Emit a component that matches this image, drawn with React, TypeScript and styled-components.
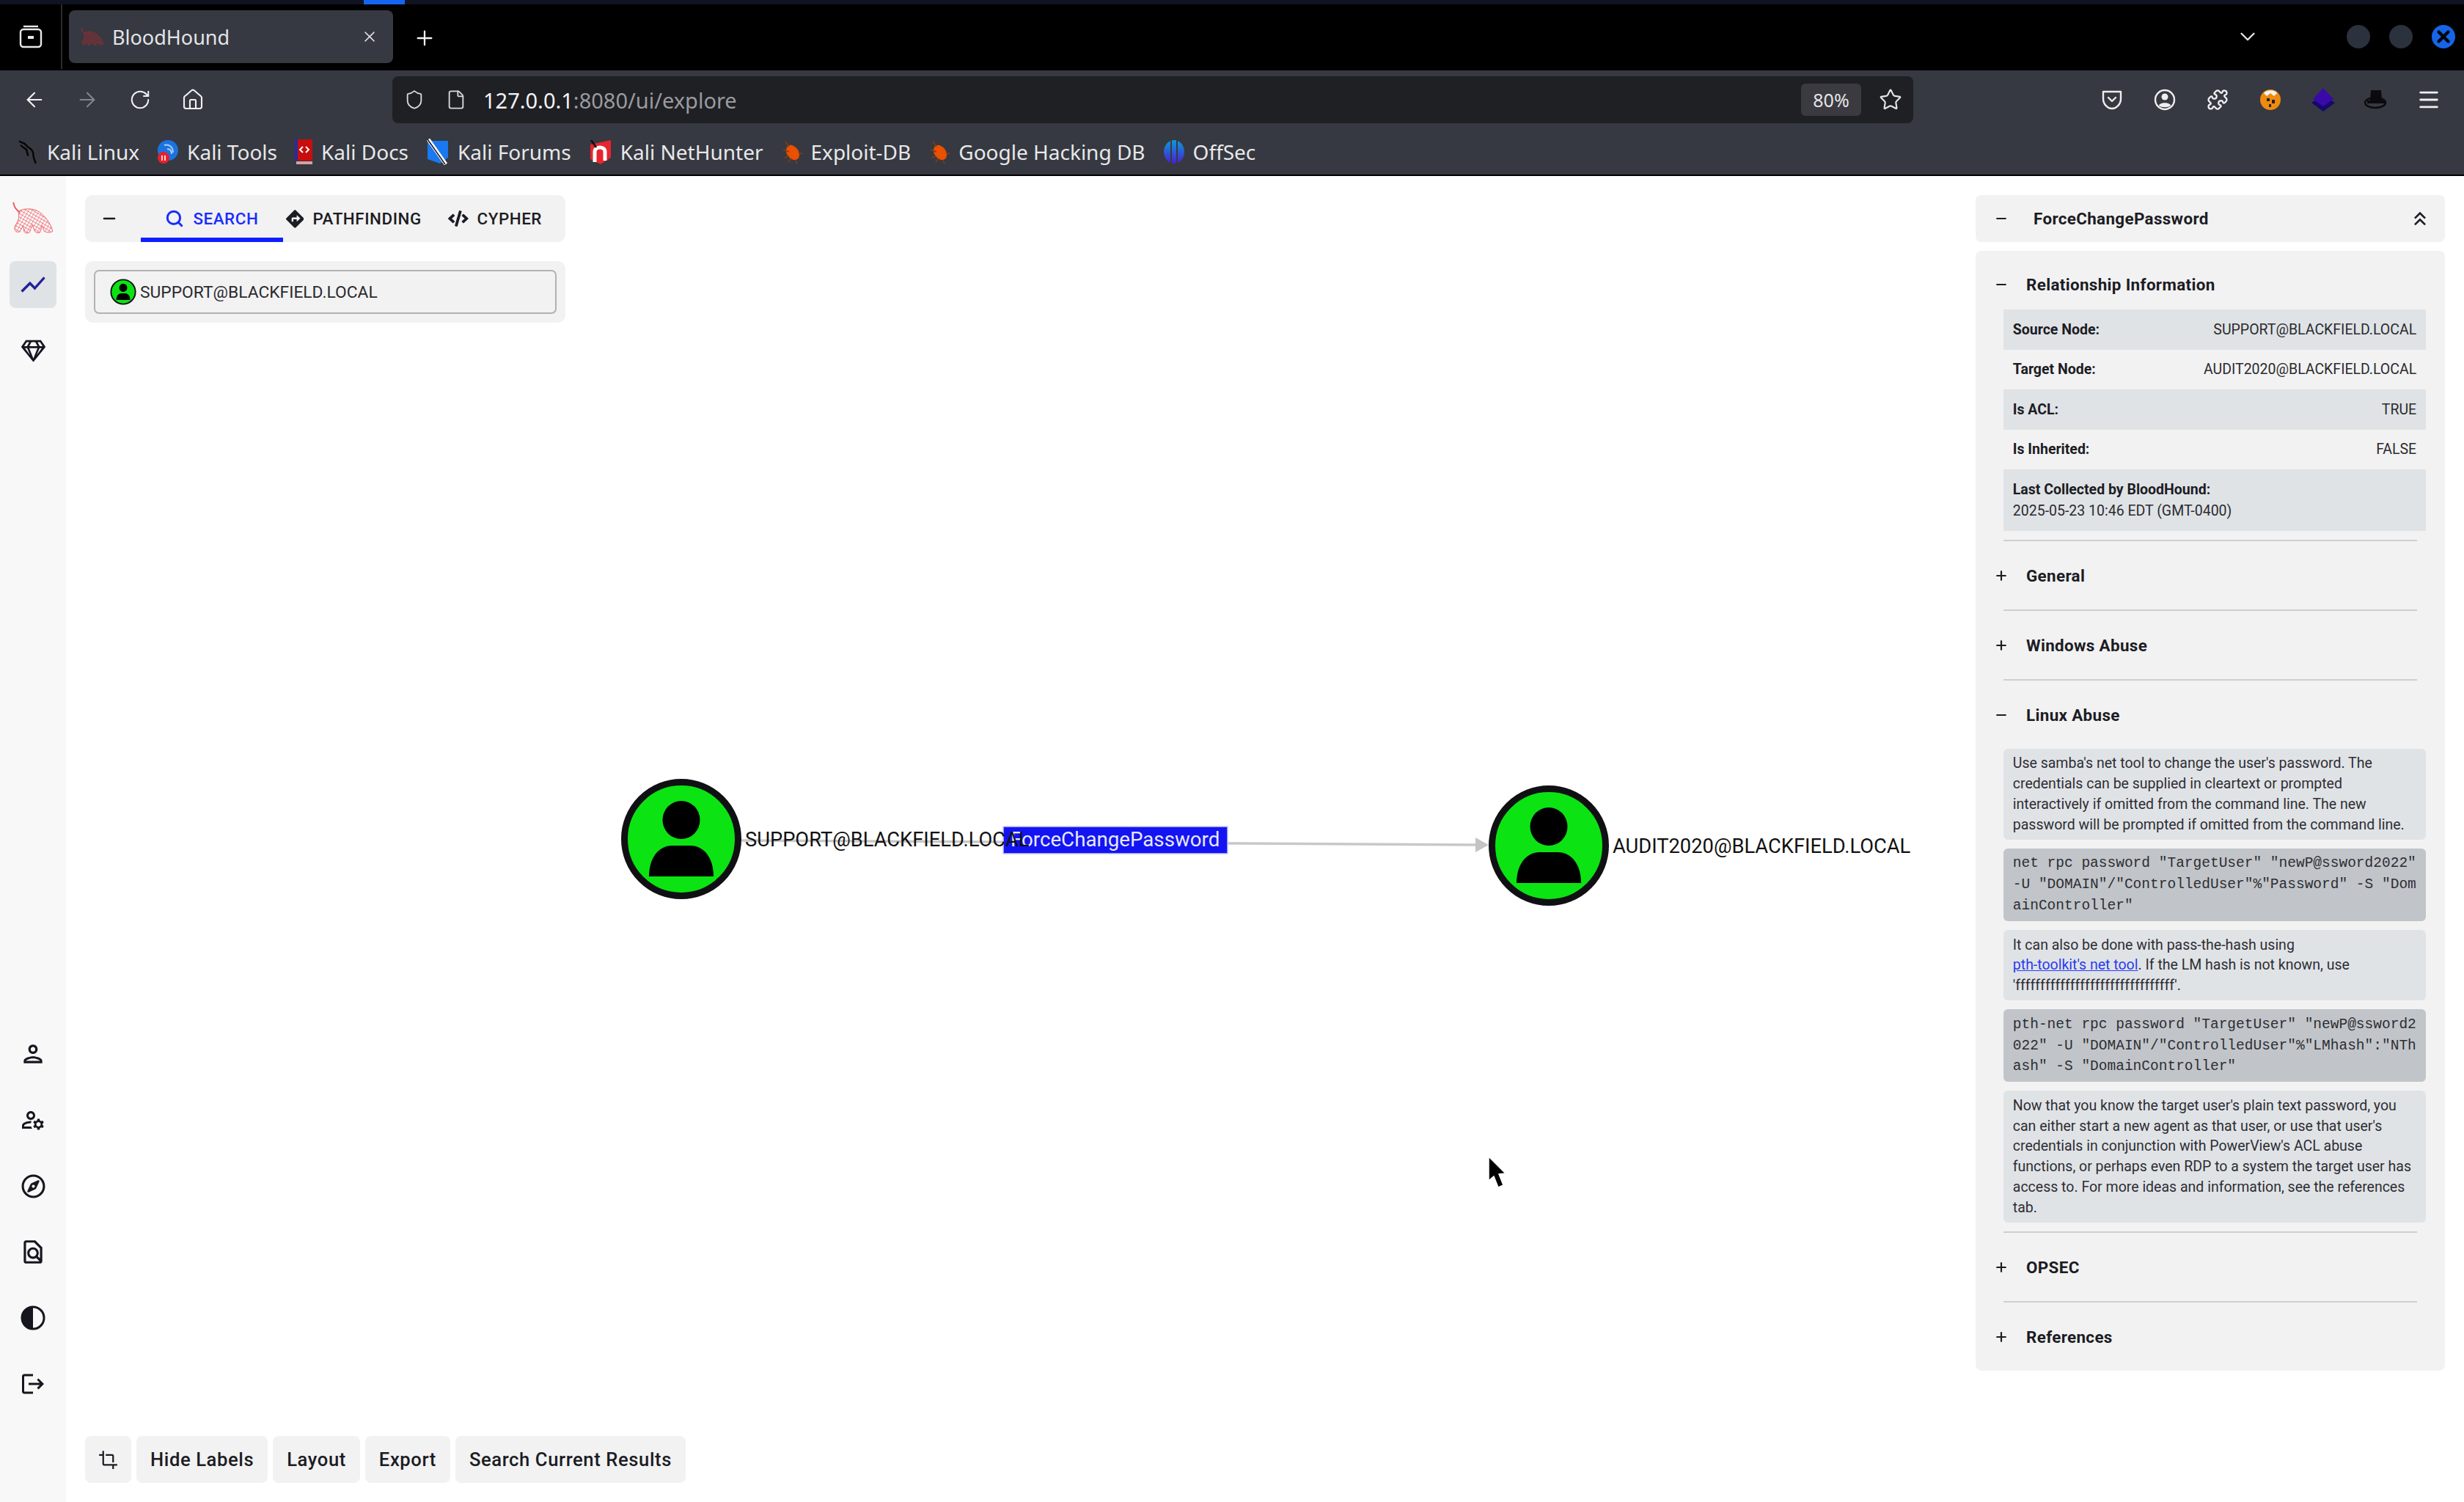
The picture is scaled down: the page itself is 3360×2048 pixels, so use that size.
import React from "react";
import styled, { createGlobalStyle } from "styled-components";
import { ArrowLeft, ArrowRight, RotateCw, Home, Shield, File, Star, Plus, X, ChevronDown, Puzzle, Menu, Minus, Search as SearchGlyph } from "lucide-react";
import { MdShowChart, MdOutlinePerson, MdOutlineManageAccounts, MdOutlineFindInPage, MdLogout, MdCrop, MdKeyboardDoubleArrowUp } from "react-icons/md";
import { FaRegCompass, FaRegGem, FaDirections, FaCode } from "react-icons/fa";

const Global = createGlobalStyle`
  html, body { margin: 0; padding: 0; background: #fff; }
  * { box-sizing: border-box; }
  body { font-family: Roboto, "Liberation Sans", sans-serif; width: 3360px; height: 2048px; overflow: hidden; }
`;

const Page = styled.div`
  width: 3360px; height: 2048px; display: flex; flex-direction: column;
`;
const Strip = styled.div`
  height: 6px; background: #0f1322; display: flex;
`;
const StripMark = styled.div`
  width: 56px; height: 6px; margin-left: 496px; background: #1565f0;
`;

/* ---- browser chrome ---- */
const TabBar = styled.div`
  height: 90px; background: #000; display: flex; align-items: flex-start; color: #e8e8ea; padding-right: 12px;
  font-family: "Noto Sans", sans-serif;
`;
const ViewButton = styled.div`
  width: 85px; height: 88px; border-right: 2px solid #2c2c30; display: flex; align-items: center; justify-content: center;
`;
const Tab = styled.div`
  width: 442px; height: 72px; margin: 8px 0 0 9px; background: #363941; border-radius: 8px; display: flex; align-items: center; padding: 0 20px 0 16px;
  font-size: 27px; gap: 11px;
`;
const TabTitle = styled.span`
  flex: 1; color: #e4e4e8;
`;
const NewTab = styled.div`
  width: 32px; height: 32px; margin: 30px 0 0 27px; display: flex; align-items: center; justify-content: center;
`;
const ChevronSlot = styled.div`
  margin: 26px 0 0 auto; display: flex; align-items: center; justify-content: center; width: 36px; height: 36px;
`;
const WindowDot = styled.div<{ $active?: boolean; $first?: boolean }>`
  width: 32px; height: 32px; border-radius: 50%; margin: 28px 0 0 ${(p) => (p.$first ? "117px" : "26px")};
  background: ${(p) => (p.$active ? "#1565e8" : "#2b313d")}; display: flex; align-items: center; justify-content: center; color: #02050a;
`;
const NavBar = styled.div`
  height: 80px; background: #363941; display: flex; align-items: center; padding-left: 11px; color: #f0f0f2;
  font-family: "Noto Sans", sans-serif;
`;
const NavButton = styled.div<{ $dim?: boolean }>`
  width: 72px; height: 60px; display: flex; align-items: center; justify-content: center; color: ${(p) => (p.$dim ? "#83858b" : "#f0f0f2")};
`;
const UrlBar = styled.div`
  width: 2074px; height: 64px; margin: 0 235px 0 236px; background: #1f2024; border-radius: 8px; display: flex; align-items: center; padding: 0 16px 0 16px; font-size: 29px;
`;
const UrlIconSlot = styled.div`
  width: 28px; display: flex; justify-content: center; margin-right: 29px; color: #d9d9dd;
`;
const UrlText = styled.div`
  flex: 1; margin-left: -6px; color: #f4f4f6;
`;
const UrlDim = styled.span`
  color: #9a9ba0;
`;
const ZoomPill = styled.div`
  width: 82px; height: 44px; background: #3a3a40; border-radius: 6px; display: flex; align-items: center; justify-content: center; font-size: 25px; color: #e4e4e6;
`;
const StarSlot = styled.div`
  width: 71px; padding-left: 8px; display: flex; justify-content: center; color: #e4e4e6; margin-right: -16px;
`;
const Bookmarks = styled.div`
  height: 64px; background: #363941; border-bottom: 2px solid #000; display: flex; align-items: center; padding-left: 25px; gap: 24px;
  font-family: "Noto Sans", sans-serif; font-size: 28px; color: #e8e8ea;
`;
const Bookmark = styled.div`
  display: flex; align-items: center; gap: 11px; white-space: nowrap;
`;

/* ---- app ---- */
const Main = styled.div`
  flex: 1; display: flex; min-height: 0; color: #1a1a22; font-family: Roboto, sans-serif;
`;
const Sidebar = styled.nav`
  width: 90px; background: #f8f8f8; display: flex; flex-direction: column; align-items: center; padding: 35px 0 129px;
`;
const LogoSlot = styled.div`
  height: 44px; margin-bottom: 37px; display: flex;
`;
const NavGroup = styled.div<{ $bottom?: boolean }>`
  display: flex; flex-direction: column; gap: 26px; ${(p) => p.$bottom && "margin-top: auto;"}
`;
const SideItem = styled.div<{ $active?: boolean }>`
  width: 64px; height: 64px; border-radius: 8px; display: flex; align-items: center; justify-content: center;
  background: ${(p) => (p.$active ? "#e0e3e6" : "transparent")}; color: ${(p) => (p.$active ? "#22239a" : "#16161f")};
`;
const Canvas = styled.div`
  flex: 1; position: relative; display: flex; justify-content: space-between; padding: 26px;
`;
const GraphLayer = styled.svg`
  position: absolute; left: 0; top: 0; width: 3270px; height: 1808px;
`;
const NodeLabel = styled.text`
  font-family: Roboto, sans-serif; font-size: 27.3px; fill: #111;
`;
const EdgeLabel = styled.text`
  font-family: Roboto, sans-serif; font-size: 27.7px; fill: #e6e8ff;
`;
const LeftColumn = styled.div`
  position: relative; width: 860px; display: flex; flex-direction: column;
`;
const Toolbar = styled.div`
  width: 655px; height: 64px; background: #f2f2f2; border-radius: 10px; display: flex; align-items: stretch;
`;
const Collapse = styled.div`
  width: 76px; display: flex; align-items: center; justify-content: center; padding-right: 9px;
`;
const TabItem = styled.div<{ $active?: boolean }>`
  display: flex; align-items: center; justify-content: center; gap: 12px; padding: 6px 4px 0; font-size: 22.4px; font-weight: 500; letter-spacing: 0.55px;
  margin-right: ${(p) => (p.$active ? "0" : "28px")};
  min-width: ${(p) => (p.$active ? "194px" : "0")};
  color: ${(p) => (p.$active ? "#1a2dff" : "#1c1c24")};
  border-bottom: 6px solid ${(p) => (p.$active ? "#0f1eff" : "transparent")};
`;
const SearchCard = styled.div`
  width: 655px; height: 84px; margin-top: 26px; background: #f2f2f2; border-radius: 10px; padding: 12px;
`;
const SearchField = styled.div`
  height: 60px; border: 2px solid #b2b2b2; border-radius: 7px; display: flex; align-items: center; gap: 5px; padding-left: 20px; font-size: 22.8px; color: #2a2a30;
`;
const ActionRow = styled.div`
  margin-top: auto; display: flex; gap: 7px;
`;
const ActionButton = styled.div`
  flex: none; height: 64px; padding: 0 19px; background: #f2f2f2; border-radius: 8px; display: flex; align-items: center; font-size: 25.6px; font-weight: 500; letter-spacing: 0.6px; color: #1c1c24; white-space: nowrap;
`;
const CropButton = styled(ActionButton)`
  width: 63px; padding: 0; justify-content: center;
`;
const RightColumn = styled.div`
  position: relative; width: 640px; display: flex; flex-direction: column; gap: 12px;
`;
const PanelHead = styled.div`
  height: 64px; background: #f2f2f2; border-radius: 8px; display: flex; align-items: center; padding: 0 18px 0 25px; gap: 34px; font-size: 22.4px; font-weight: 700; letter-spacing: 0.35px; color: #1c1c24;
`;
const PanelTitle = styled.div`
  flex: 1;
`;
const PanelBody = styled.div`
  background: #f2f2f2; border-radius: 8px; padding: 11px 0 12px;
`;
const SectionHead = styled.div`
  height: 69px; display: flex; align-items: center; gap: 24px; padding-left: 25px; font-size: 22.4px; font-weight: 700; letter-spacing: 0.35px; color: #1c1c24;
`;
const Rule = styled.hr`
  margin: 12px 38px; height: 2px; border: 0; background: #cfcfcf;
`;
const Rows = styled.div`
  margin: 0 26px 0 38px;
`;
const Row = styled.div<{ $shaded?: boolean }>`
  height: 54.5px; padding: 0 12.8px; display: flex; align-items: center; justify-content: space-between; font-size: 19.5px; color: #2b2b30;
  background: ${(p) => (p.$shaded ? "#e0e3e6" : "transparent")};
`;
const RowLabel = styled.span`
  font-weight: 700; color: #1c1c24;
`;
const StackRow = styled.div`
  height: 84px; padding: 0 12.8px; display: flex; flex-direction: column; justify-content: center; gap: 6px; font-size: 19.5px; background: #e0e3e6; color: #2b2b30;
`;
const Note = styled.p`
  margin: 12px 0 0; padding: 6.4px 12.8px; background: #e0e3e6; border-radius: 6px; font-size: 19.5px; line-height: 27.8px; color: #2e2e34;
`;
const Code = styled.pre`
  margin: 12px 0 0; padding: 6.4px 12.8px; background: #c1c5c9; border-radius: 6px; font-family: "Liberation Mono", monospace; font-size: 19.5px; line-height: 28.8px; color: #2e2e34;
  white-space: pre-wrap; word-break: break-all;
`;
const DocLink = styled.a`
  color: #2a3cf0; text-decoration: underline; display: inline-block; white-space: nowrap;
`;

/* ---- drawings ---- */
const Hound = ({ id, color, width, height, line }: { id: string; color: string; width: number; height: number; line: number }) => (
  <svg width={width} height={height} viewBox="0 0 60 46">
    <defs>
      <pattern id={id} width="4.4" height="4.4" patternUnits="userSpaceOnUse" patternTransform="rotate(30)">
        <path d="M0 0H4.4M0 0V4.4" stroke={color} strokeWidth={line} fill="none" />
      </pattern>
    </defs>
    <path d="M2 1C3 8 6 12 11 15" stroke={color} strokeWidth="2" fill="none" />
    <path d="M9 14C16 9 30 9 38 14C47 20 55 30 58 42C56 45 49 44 46 42L43 34L40 44C36 45 33 44 32 41L29 33L25 44C20 46 17 44 17 41L16 34L11 43C6 44 3 42 4 36C6 30 12 26 9 14Z" fill={`url(#${id})`} stroke={color} strokeWidth="0.9" />
  </svg>
);

const PersonFigure = () => (
  <>
    <ellipse cx="0" cy="-26" rx="25.5" ry="26" fill="#000" />
    <path d="M-44 51C-44 27 -32 9 -12 9H12C32 9 44 27 44 51Z" fill="#000" />
  </>
);
const UserNode = ({ x, y }: { x: number; y: number }) => (
  <g transform={`translate(${x} ${y})`}>
    <circle r="77.5" fill="#0ce313" stroke="#101014" strokeWidth="9" />
    <PersonFigure />
  </g>
);
const UserChip = () => (
  <svg width="36" height="36" viewBox="-84 -84 168 168">
    <circle r="77.5" fill="#0ce313" stroke="#101014" strokeWidth="9" />
    <PersonFigure />
  </svg>
);
const HalfCircle = () => (
  <svg width="34" height="34" viewBox="0 0 34 34">
    <circle cx="17" cy="17" r="15" fill="none" stroke="#16161f" strokeWidth="3" />
    <path d="M17 2A15 15 0 0 0 17 32Z" fill="#16161f" />
  </svg>
);
const FirefoxView = () => (
  <svg width="34" height="34" viewBox="0 0 34 34" fill="none" stroke="#e8e8ea" strokeWidth="2.4">
    <rect x="3" y="7" width="28" height="24" rx="4" />
    <path d="M7 3H27" />
    <rect x="13" y="16" width="8" height="4" fill="#e8e8ea" stroke="none" />
  </svg>
);
const PocketIcon = () => (
  <svg width="30" height="30" viewBox="0 0 30 30" fill="none" stroke="#eee" strokeWidth="2.4" strokeLinecap="round" strokeLinejoin="round">
    <path d="M3 4H27V14C27 21 21 27 15 27C9 27 3 21 3 14Z" />
    <path d="M10 12L15 17L20 12" />
  </svg>
);
const AccountIcon = () => (
  <svg width="30" height="30" viewBox="0 0 30 30">
    <circle cx="15" cy="15" r="13" fill="none" stroke="#eee" strokeWidth="2.4" />
    <circle cx="15" cy="11" r="4.5" fill="#eee" />
    <path d="M7 23C8 18 22 18 23 23C20 26 10 26 7 23Z" fill="#eee" />
  </svg>
);
const FoxIcon = () => (
  <svg width="30" height="30" viewBox="0 0 30 30">
    <circle cx="15" cy="15" r="14" fill="#ef8a10" />
    <path d="M6 6C10 1 21 1 24 6L20 10L15 6L10 10Z" fill="#f4f4f4" />
    <path d="M10 13H14V17H10ZM17 15H21V20H17ZM13 21H16V25H13Z" fill="#222" />
  </svg>
);
const GemIcon = () => (
  <svg width="32" height="32" viewBox="0 0 32 32">
    <path d="M16 10L32 20L16 32L0 20Z" fill="#17086e" />
    <path d="M16 0L30 15L16 25L2 15Z" fill="#3a0aa8" />
  </svg>
);
const HatIcon = () => (
  <svg width="32" height="30" viewBox="0 0 32 30">
    <path d="M9 2H23L24 16H8Z" fill="#0b0b0d" />
    <ellipse cx="15" cy="19" rx="14" ry="7" fill="none" stroke="#0b0b0d" strokeWidth="2.5" />
    <path d="M4 18H28" stroke="#0b0b0d" strokeWidth="4" />
  </svg>
);
const Dragon = () => (
  <svg width="28" height="34" viewBox="0 0 30 34" fill="none" stroke="#050505" strokeWidth="2.6" strokeLinecap="round">
    <path d="M2 2L9 5L14 10C20 13 22 18 22 22C22 26 24 29 25 33" />
    <path d="M4 8L12 14L14 22" />
  </svg>
);
const ToolsBadge = () => (
  <svg width="30" height="34" viewBox="0 0 30 34">
    <circle cx="15" cy="15" r="14" fill="#1b73e0" />
    <path d="M10 8C16 6 22 10 22 18M14 13C18 13 20 16 20 20" stroke="#a8cdf6" strokeWidth="2" fill="none" />
    <circle cx="9" cy="25" r="8" fill="#e81f2c" />
    <path d="M7 22V29M11 22V29" stroke="#fff" strokeWidth="1.6" />
  </svg>
);
const DocsBadge = () => (
  <svg width="25" height="34" viewBox="0 0 25 34">
    <rect x="0" y="0" width="24" height="29" fill="#c80d0d" />
    <rect x="0" y="0" width="4" height="29" fill="#2a2a9a" />
    <rect x="2" y="30" width="22" height="4" fill="#d9a0a0" />
    <path d="M11 10L7 14L11 18M15 10L19 14L15 18" stroke="#fff" strokeWidth="2" fill="none" />
  </svg>
);
const ForumsBadge = () => (
  <svg width="32" height="36" viewBox="0 0 32 36">
    <path d="M2 3H30V26L19 34L2 28Z" fill="#1a78f0" />
    <path d="M3 1L27 35" stroke="#fff" strokeWidth="5" />
    <path d="M2 1L26 35" stroke="#111" strokeWidth="1.4" />
  </svg>
);
const NetHunterBadge = () => (
  <svg width="32" height="36" viewBox="0 0 32 36">
    <path d="M2 8L30 2V26L16 35L2 28Z" fill="#e8242f" />
    <path d="M8 32V18C8 10 22 10 22 18V30" stroke="#fff" strokeWidth="5" fill="none" />
    <path d="M3 2L10 12" stroke="#111" strokeWidth="2.5" />
  </svg>
);
const BugBadge = () => (
  <svg width="30" height="34" viewBox="0 0 30 34" fill="none">
    <ellipse cx="16" cy="18" rx="8" ry="11" transform="rotate(-35 16 18)" fill="#ea5000" />
    <path d="M3 14L11 17M5 25L11 23M10 31L14 26M20 29L22 33M6 3L11 10M24 18L29 20" stroke="#8a3a12" strokeWidth="1.6" />
  </svg>
);
const OffSecBadge = () => (
  <svg width="30" height="36" viewBox="0 0 30 36">
    <defs>
      <linearGradient id="offsec" x1="0" y1="0" x2="0" y2="1">
        <stop offset="0" stopColor="#0c9ad6" />
        <stop offset="1" stopColor="#4a1fd0" />
      </linearGradient>
    </defs>
    <ellipse cx="15" cy="18" rx="14" ry="16" fill="url(#offsec)" />
    <path d="M11 0V36M19 0V36" stroke="#363941" strokeWidth="2" />
  </svg>
);

const Icon = { size: 32, strokeWidth: 1.6 };

export default function App() {
  return (
    <Page>
      <Global />
      <Strip><StripMark /></Strip>
      <TabBar>
        <ViewButton><FirefoxView /></ViewButton>
        <Tab>
          <Hound id="favicon" color="#a02a2e" width={32} height={26} line={2} />
          <TabTitle>BloodHound</TabTitle>
          <X size={24} strokeWidth={1.6} color="#e4e4e8" />
        </Tab>
        <NewTab><Plus size={34} strokeWidth={1.7} color="#f4f4f4" /></NewTab>
        <ChevronSlot><ChevronDown size={34} strokeWidth={1.6} color="#e8e8ea" /></ChevronSlot>
        <WindowDot $first />
        <WindowDot />
        <WindowDot $active><X size={26} strokeWidth={4} /></WindowDot>
      </TabBar>
      <NavBar>
        <NavButton><ArrowLeft {...Icon} /></NavButton>
        <NavButton $dim><ArrowRight {...Icon} /></NavButton>
        <NavButton><RotateCw size={30} strokeWidth={1.6} /></NavButton>
        <NavButton><Home {...Icon} /></NavButton>
        <UrlBar>
          <UrlIconSlot><Shield size={30} strokeWidth={1.6} /></UrlIconSlot>
          <UrlIconSlot><File size={30} strokeWidth={1.6} /></UrlIconSlot>
          <UrlText>127.0.0.1<UrlDim>:8080/ui/explore</UrlDim></UrlText>
          <ZoomPill>80%</ZoomPill>
          <StarSlot><Star size={32} strokeWidth={1.6} /></StarSlot>
        </UrlBar>
        <NavButton><PocketIcon /></NavButton>
        <NavButton><AccountIcon /></NavButton>
        <NavButton><Puzzle size={30} strokeWidth={1.8} /></NavButton>
        <NavButton><FoxIcon /></NavButton>
        <NavButton><GemIcon /></NavButton>
        <NavButton><HatIcon /></NavButton>
        <NavButton><Menu size={34} strokeWidth={2} /></NavButton>
      </NavBar>
      <Bookmarks>
        <Bookmark><Dragon />Kali Linux</Bookmark>
        <Bookmark><ToolsBadge />Kali Tools</Bookmark>
        <Bookmark><DocsBadge />Kali Docs</Bookmark>
        <Bookmark><ForumsBadge />Kali Forums</Bookmark>
        <Bookmark><NetHunterBadge />Kali NetHunter</Bookmark>
        <Bookmark><BugBadge />Exploit-DB</Bookmark>
        <Bookmark><BugBadge />Google Hacking DB</Bookmark>
        <Bookmark><OffSecBadge />OffSec</Bookmark>
      </Bookmarks>
      <Main>
        <Sidebar>
          <LogoSlot><Hound id="logo" color="#ee5560" width={60} height={44} line={1.1} /></LogoSlot>
          <NavGroup>
            <SideItem $active><MdShowChart size={40} /></SideItem>
            <SideItem><FaRegGem size={33} /></SideItem>
          </NavGroup>
          <NavGroup $bottom>
            <SideItem><MdOutlinePerson size={38} /></SideItem>
            <SideItem><MdOutlineManageAccounts size={36} /></SideItem>
            <SideItem><FaRegCompass size={33} /></SideItem>
            <SideItem><MdOutlineFindInPage size={38} /></SideItem>
            <SideItem><HalfCircle /></SideItem>
            <SideItem><MdLogout size={36} /></SideItem>
          </NavGroup>
        </Sidebar>
        <Canvas>
          <GraphLayer viewBox="90 240 3270 1808">
            <line x1="1011" y1="1146" x2="2014" y2="1152" stroke="#c8c8c8" strokeWidth="3.5" />
            <path d="M2012 1142L2030 1152L2012 1162Z" fill="#c4c4c4" />
            <rect x="1368" y="1127" width="306" height="37" fill="#1414f2" stroke="#c7cbff" strokeWidth="1.5" />
            <EdgeLabel x="1378" y="1154">ForceChangePassword</EdgeLabel>
            <UserNode x={929} y={1144} />
            <UserNode x={2112} y={1153} />
            <NodeLabel x="1016" y="1154">SUPPORT@BLACKFIELD.LOCAL</NodeLabel>
            <NodeLabel x="2199" y="1163">AUDIT2020@BLACKFIELD.LOCAL</NodeLabel>
            <path d="M2030 1577L2030 1610L2037 1604L2043 1619L2050 1616L2044 1601L2053 1600Z" fill="#000" stroke="#fff" strokeWidth="1.5" />
          </GraphLayer>
          <LeftColumn>
            <Toolbar>
              <Collapse><Minus size={24} strokeWidth={2.6} /></Collapse>
              <TabItem $active><SearchGlyph size={26} strokeWidth={2.8} />SEARCH</TabItem>
              <TabItem><FaDirections size={25} />PATHFINDING</TabItem>
              <TabItem><FaCode size={28} />CYPHER</TabItem>
            </Toolbar>
            <SearchCard>
              <SearchField><UserChip />SUPPORT@BLACKFIELD.LOCAL</SearchField>
            </SearchCard>
            <ActionRow>
              <CropButton><MdCrop size={27} /></CropButton>
              <ActionButton>Hide Labels</ActionButton>
              <ActionButton>Layout</ActionButton>
              <ActionButton>Export</ActionButton>
              <ActionButton>Search Current Results</ActionButton>
            </ActionRow>
          </LeftColumn>
          <RightColumn>
            <PanelHead>
              <Minus size={20} strokeWidth={2.6} />
              <PanelTitle>ForceChangePassword</PanelTitle>
              <MdKeyboardDoubleArrowUp size={32} />
            </PanelHead>
            <PanelBody>
              <SectionHead><Minus size={20} strokeWidth={2.6} />Relationship Information</SectionHead>
              <Rows>
                <Row $shaded><RowLabel>Source Node:</RowLabel>SUPPORT@BLACKFIELD.LOCAL</Row>
                <Row><RowLabel>Target Node:</RowLabel>AUDIT2020@BLACKFIELD.LOCAL</Row>
                <Row $shaded><RowLabel>Is ACL:</RowLabel>TRUE</Row>
                <Row><RowLabel>Is Inherited:</RowLabel>FALSE</Row>
                <StackRow><RowLabel>Last Collected by BloodHound:</RowLabel>2025-05-23 10:46 EDT (GMT-0400)</StackRow>
              </Rows>
              <Rule />
              <SectionHead><Plus size={20} strokeWidth={2.6} />General</SectionHead>
              <Rule />
              <SectionHead><Plus size={20} strokeWidth={2.6} />Windows Abuse</SectionHead>
              <Rule />
              <SectionHead><Minus size={20} strokeWidth={2.6} />Linux Abuse</SectionHead>
              <Rows>
                <Note>Use samba's net tool to change the user's password. The credentials can be supplied in cleartext or prompted interactively if omitted from the command line. The new password will be prompted if omitted from the command line.</Note>
                <Code>{`net rpc password "TargetUser" "newP@ssword2022" -U "DOMAIN"/"ControlledUser"%"Password" -S "DomainController"`}</Code>
                <Note>It can also be done with pass-the-hash using <DocLink>pth-toolkit's net tool</DocLink>. If the LM hash is not known, use 'ffffffffffffffffffffffffffffffff'.</Note>
                <Code>{`pth-net rpc password "TargetUser" "newP@ssword2022" -U "DOMAIN"/"ControlledUser"%"LMhash":"NThash" -S "DomainController"`}</Code>
                <Note>Now that you know the target user's plain text password, you can either start a new agent as that user, or use that user's credentials in conjunction with PowerView's ACL abuse functions, or perhaps even RDP to a system the target user has access to. For more ideas and information, see the references tab.</Note>
              </Rows>
              <Rule />
              <SectionHead><Plus size={20} strokeWidth={2.6} />OPSEC</SectionHead>
              <Rule />
              <SectionHead><Plus size={20} strokeWidth={2.6} />References</SectionHead>
            </PanelBody>
          </RightColumn>
        </Canvas>
      </Main>
    </Page>
  );
}
